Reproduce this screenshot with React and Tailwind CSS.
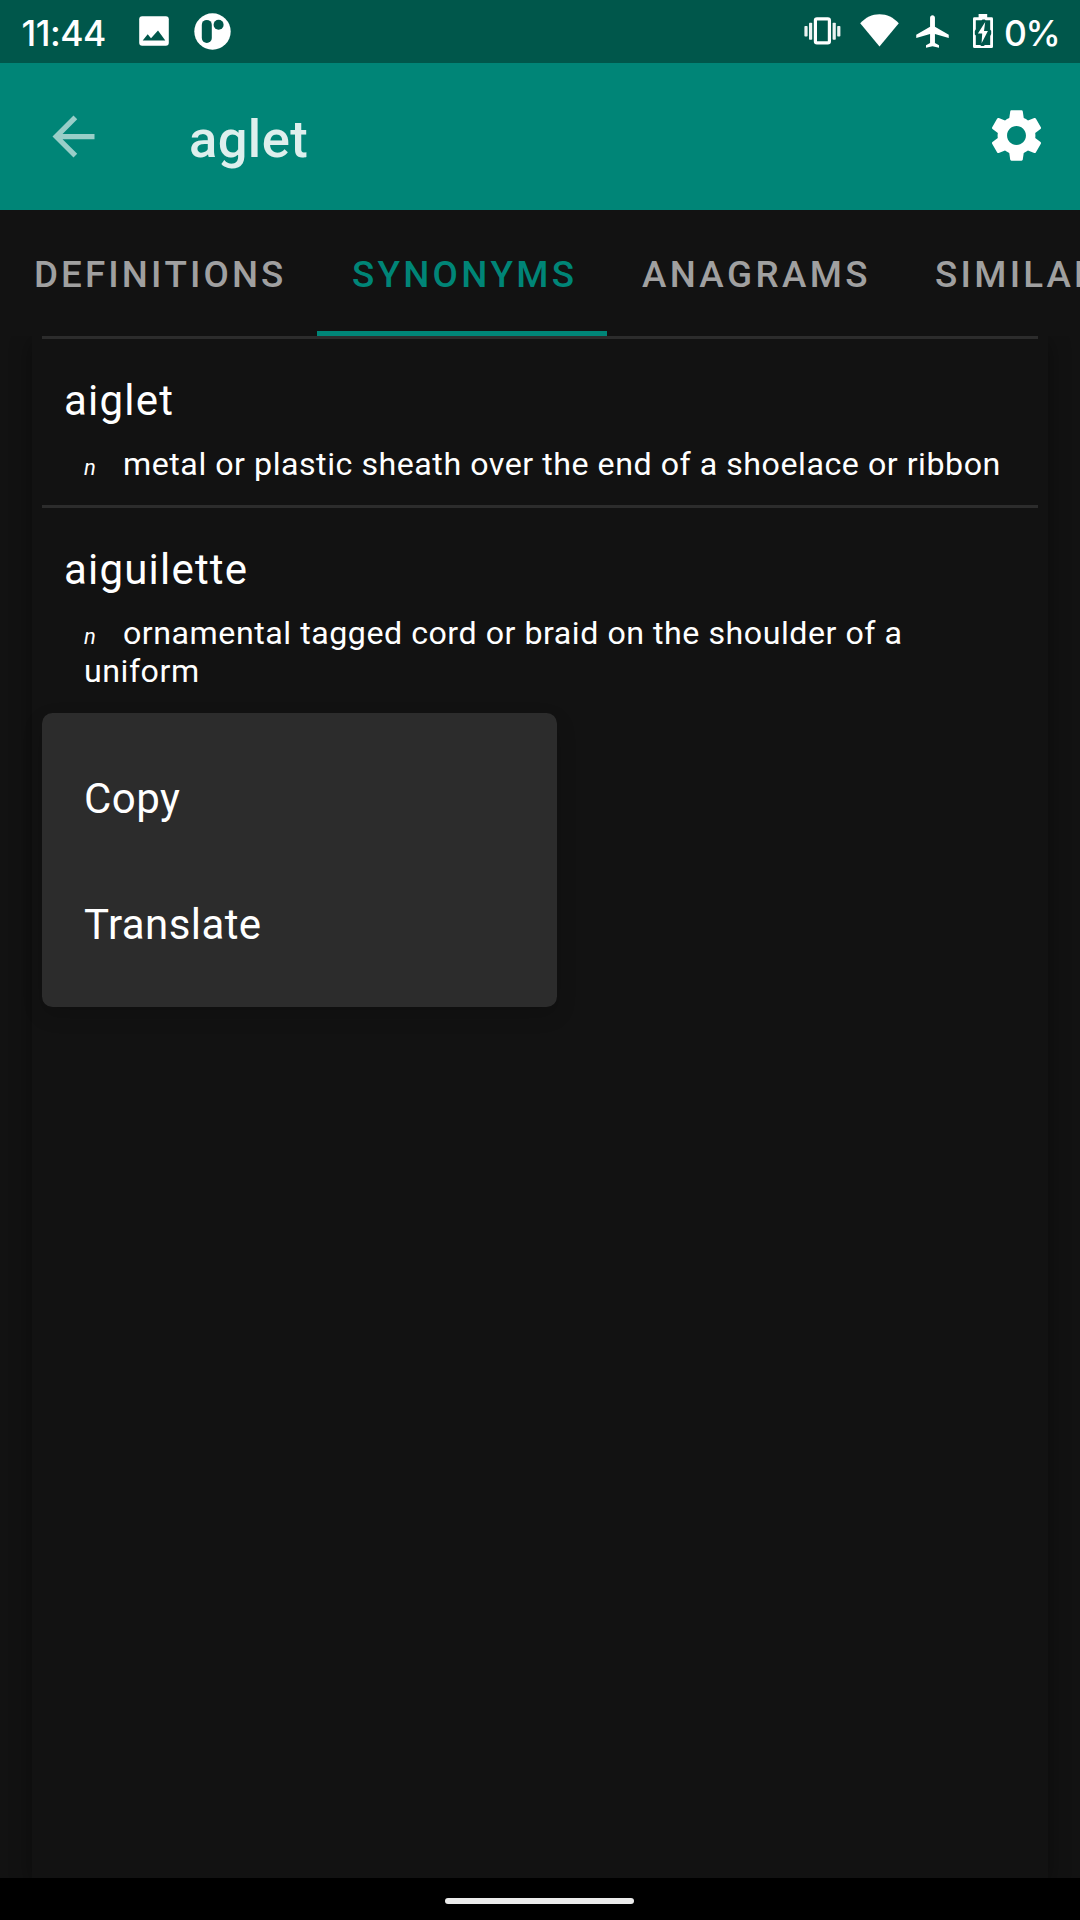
import { MdAirplanemodeActive, MdArrowBack, MdSettings } from "react-icons/md";

const TABS = [
  { label: "Definitions", size: "w-[317px] pl-[34px] tracking-[3.1px]" },
  { label: "Synonyms", size: "w-[290px] pl-[35px] tracking-[3.28px]" },
  { label: "Anagrams", size: "w-[293px] pl-[35px] tracking-[3.4px]" },
  { label: "Similar words", size: "w-[400px] pl-[35px] tracking-[3.28px]" },
];

const ENTRIES = [
  {
    word: "aiglet",
    kind: "n",
    text: "metal or plastic sheath over the end of a shoelace or ribbon",
  },
  {
    word: "aiguilette",
    kind: "n",
    text: "ornamental tagged cord or braid on the shoulder of a uniform",
  },
];

const MENU = ["Copy", "Translate"];

function PictureIcon() {
  return (
    <svg className="mb-px h-[30px] w-[30px]" viewBox="0 0 30 30">
      <rect x="0.2" y="0.2" width="29.6" height="29.6" rx="3" fill="white" />
      <path d="M3.7 24.5 8.7 18.3 12 22.2 19 14.4 26.3 24.5Z" fill="#00574b" />
    </svg>
  );
}

function AppBadge() {
  return (
    <svg className="ml-[24.5px] h-[37px] w-[37px]" viewBox="0 0 37 37">
      <circle cx="18.5" cy="18.5" r="18.2" fill="white" />
      <rect x="7.8" y="6.9" width="10" height="23" rx="5" fill="#00574b" />
      <circle cx="24.6" cy="11.8" r="5" fill="#00574b" />
    </svg>
  );
}

function VibrateIcon() {
  return (
    <svg className="mb-px h-7 w-[38px]" viewBox="0 0 38 28" fill="white">
      <rect x="11.4" y="1.8" width="14" height="24" rx="1.6" fill="none" stroke="white" strokeWidth="3.2" />
      <rect x="5" y="5.7" width="3.2" height="17" rx="0.8" opacity="0.92" />
      <rect x="0.4" y="9" width="3.2" height="10.6" rx="0.8" opacity="0.92" />
      <rect x="28.6" y="5.7" width="3.2" height="17" rx="0.8" opacity="0.92" />
      <rect x="33.2" y="9" width="3.2" height="10.6" rx="0.8" opacity="0.92" />
    </svg>
  );
}

function WifiIcon() {
  return (
    <svg className="ml-[18px] mb-[2px] h-[33px] w-[39px]" viewBox="0 0 39 33" fill="white">
      <path d="M19.5 32.6 0.2 9.2C5.6 3.4 12 0.2 19.5 0.2S33.4 3.4 38.8 9.2Z" />
    </svg>
  );
}

function BatteryIcon() {
  return (
    <svg className="ml-[21px] mb-px h-[34px] w-5" viewBox="0 0 20 34" fill="white">
      <path
        fillRule="evenodd"
        d="M5.6 0H14.2V3.3H18.6Q20 3.3 20 4.7V32.5Q20 34 18.6 34H1.4Q0 34 0 32.5V4.7Q0 3.3 1.4 3.3H5.6ZM2.8 6.2V15.2L1.8 17V20.5L2.8 21.5V31H7.2L8.2 32H10.6L12 31H17.2V22L18.2 20V16.8L17.2 15.8V6.2H12.6L11.8 5.4H9.6L8.6 6.2Z"
      />
      <path d="M12.2 8 4.9 19.6H9.2L8.6 29.3 14.9 17H11Z" />
    </svg>
  );
}

function StatusBar() {
  return (
    <div className="flex h-[63px] shrink-0 items-center bg-[#00574b] pl-[21.5px] pr-[21px] text-white">
      <span className="w-[117.5px] pt-[5px] font-['Inter',sans-serif] text-[35.5px] font-medium tracking-[-0.5px]">
        11:44
      </span>
      <PictureIcon />
      <AppBadge />
      <div className="ml-auto flex items-center">
        <VibrateIcon />
        <WifiIcon />
        <MdAirplanemodeActive className="ml-[14px] size-[39px]" />
        <BatteryIcon />
        <span className="ml-[11px] w-[55px] whitespace-nowrap pt-[5px] font-['Inter',sans-serif] text-[35.5px] font-medium tracking-[-1.5px]">
          0%
        </span>
      </div>
    </div>
  );
}

function AppBar() {
  return (
    <header className="flex h-[147px] shrink-0 items-center bg-[#008577] pl-[42px] pr-[32px]">
      <MdArrowBack className="size-[63px] text-white/60" />
      <h1 className="ml-[84px] pt-[4px] text-[52.5px] font-medium leading-[62px] tracking-[0.4px] text-white/87">
        aglet
      </h1>
      <MdSettings className="mb-[2px] ml-auto size-[63px] text-white" />
    </header>
  );
}

function TabBar() {
  return (
    <nav className="flex h-[126px] shrink-0 overflow-hidden bg-[#121212]">
      {TABS.map(({ label, size }) => {
        const active = label === "Synonyms";
        return (
          <div
            key={label}
            className={`flex h-[126px] shrink-0 items-center whitespace-nowrap pt-[3px] text-[36.75px] font-medium uppercase [font-kerning:none] ${size} ${active ? "text-[#008577] shadow-[inset_0_-5px_0_#008577]" : "text-[#a0a0a0]"}`}
          >
            {label}
          </div>
        );
      })}
    </nav>
  );
}

function Entry({ word, kind, text }) {
  return (
    <article className="border-t-[3px] border-[#2c2c2c] pb-[22px] pt-[34px]">
      <h2 className="pl-[22px] text-[42px] leading-[56px] tracking-[1.2px]">{word}</h2>
      <p className="mt-4 pl-[42px] pr-[30px] text-[32.16px] leading-[38px] tracking-[0.53px]">
        <i className="mr-[27px] inline-block w-[12px] text-[22px] leading-none">{kind}</i>
        {text}
      </p>
    </article>
  );
}

function ContextMenu() {
  return (
    <div className="absolute left-[10px] top-[377px] w-[515px] rounded-[10.5px] bg-[#2c2c2c] py-[21px] shadow-[0_8px_20px_rgba(0,0,0,0.16)]">
      {MENU.map((label) => (
        <div
          key={label}
          className="flex h-[126px] items-center pl-[42px] pt-[3px] text-[42px] tracking-[0.42px]"
        >
          {label}
        </div>
      ))}
    </div>
  );
}

export default function App() {
  return (
    <div className="flex h-[1920px] w-[1080px] flex-col overflow-hidden bg-[#121212] font-['Roboto',sans-serif] text-white">
      <StatusBar />
      <AppBar />
      <TabBar />
      <main className="flex grow flex-col overflow-hidden px-8">
        <section className="relative grow bg-[#121212] px-[10px] shadow-[0_5px_20px_rgba(0,0,0,0.4)]">
          {ENTRIES.map((entry) => (
            <Entry key={entry.word} {...entry} />
          ))}
          <ContextMenu />
        </section>
      </main>
      <footer className="flex h-[42px] shrink-0 bg-black pl-[445px] pt-5">
        <div className="h-[6px] w-[189px] rounded-full bg-[#ebebeb]" />
      </footer>
    </div>
  );
}
